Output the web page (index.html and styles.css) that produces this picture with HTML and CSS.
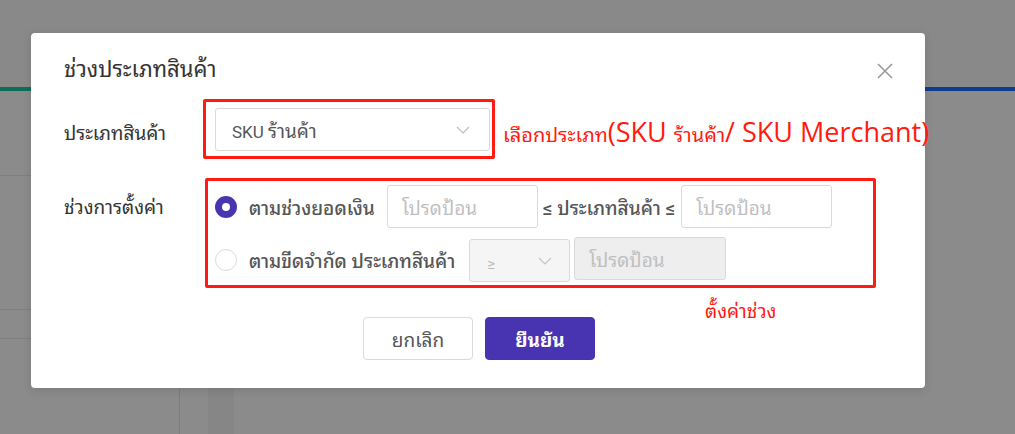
FILE: index.html
```html
<!DOCTYPE html>
<html lang="th">
<head>
<meta charset="utf-8">
<link rel="stylesheet" href="styles.css">
</head>
<body>
<div class="page">
  <div class="topbar"></div>
  <div class="tabline"><div class="tab-green"></div><div class="tab-blue"></div></div>
  <div class="content">
    <div class="leftcol">
      <div class="lrow r1"></div>
      <div class="lrow r2"></div>
      <div class="lrow r3"></div>
    </div>
    <div class="gutter"></div>
    <div class="darkcol"></div>
    <div class="rest"></div>
  </div>
</div>

<div class="modal">
  <div class="modal-head">
    <div class="title">ช่วงประเภทสินค้า</div>
    <svg class="close" width="16" height="16" viewBox="0 0 16 16"><path d="M1 1L15 15M15 1L1 15" stroke="#9a9a9a" stroke-width="1.6" fill="none"/></svg>
  </div>
  <div class="form">
    <div class="row">
      <div class="label l1">ประเภทสินค้า</div>
      <div class="field">
        <div class="mark mark1">
          <div class="select">
            <span>SKU <span class="th">ร้านค้า</span></span>
            <svg class="chev" width="14" height="8" viewBox="0 0 14 8"><path d="M1 1L7 7L13 1" stroke="#bdbdbd" stroke-width="1.2" fill="none"/></svg>
          </div>
        </div>
        <div class="note1"><span class="th">เลือกประเภท</span>(SKU <span class="th">ร้านค้า</span>/ SKU Merchant)</div>
      </div>
    </div>
    <div class="row row2">
      <div class="label l2">ช่วงการตั้งค่า</div>
      <div class="field">
        <div class="mark mark2">
          <div class="line">
            <span class="radio on"></span>
            <span class="opt">ตามช่วงยอดเงิน</span>
            <div class="input">โปรดป้อน</div>
            <span class="opt mid">≤ ประเภทสินค้า ≤</span>
            <div class="input">โปรดป้อน</div>
          </div>
          <div class="line line2">
            <span class="radio"></span>
            <span class="opt">ตามขีดจำกัด ประเภทสินค้า</span>
            <div class="mini-select"><span class="ge">≥</span><svg class="chev" width="14" height="8" viewBox="0 0 14 8"><path d="M1 1L7 7L13 1" stroke="#c4c4c4" stroke-width="1.2" fill="none"/></svg></div>
            <div class="input disabled">โปรดป้อน</div>
          </div>
          <div class="note2">ตั้งค่าช่วง</div>
        </div>
      </div>
    </div>
  </div>
  <div class="footer">
    <button class="btn cancel">ยกเลิก</button>
    <button class="btn ok">ยืนยัน</button>
  </div>
</div>
</body>
</html>
```

FILE: styles.css
```css
* { box-sizing: border-box; }
html, body { margin: 0; padding: 0; }
body {
  width: 1015px;
  height: 434px;
  overflow: hidden;
  background: #8b8b8b;
  font-family: Roboto, "Noto Sans Thai Looped", sans-serif;
  position: relative;
}
.page { display: flex; flex-direction: column; height: 434px; }
.topbar { height: 87px; background: #898989; }
.tabline { height: 4px; display: flex; }
.tab-green { width: 480px; background: #0c6e56; }
.tab-blue { flex: 1; background: #0b3f8d; }
.content { flex: 1; display: flex; }
.leftcol { width: 180px; border-right: 1px solid #7d7d7d; display: flex; flex-direction: column; }
.lrow { border-bottom: 1px solid #7f7f7f; }
.r1 { height: 85px; }
.r2 { height: 134px; }
.r3 { height: 29px; }
.gutter { width: 28px; }
.darkcol { width: 26px; background: #868686; }
.rest { flex: 1; }

.modal {
  position: absolute;
  left: 31px;
  top: 33px;
  width: 894px;
  height: 355px;
  background: #fff;
  border-radius: 4px;
  box-shadow: 0 2px 10px rgba(0,0,0,0.12);
  padding: 24px 32px 28px 33px;
  display: flex;
  flex-direction: column;
}
.modal-head { display: flex; justify-content: space-between; align-items: center; height: 26px; }
.title { font-size: 22px; color: #333; line-height: 26px; }
.close { margin-top: 2px; }

.form { display: flex; flex-direction: column; gap: 19px; margin-top: 16px; }
.row { display: flex; align-items: flex-start; }
.label { width: 139px; flex: none; font-size: 19px; color: #333; white-space: nowrap; }
.l1 { height: 60px; line-height: 70px; }
.l2 { height: 58px; line-height: 60px; }
.field { display: flex; align-items: center; flex: none; }
.mark { border: 3px solid #ff1a12; border-radius: 2px; flex: none; }
.mark1 { width: 292px; height: 60px; padding: 6px 2px 5px 9px; }
.select {
  width: 275px; height: 43px;
  border: 1px solid #d9d9d9; border-radius: 3px;
  display: flex; align-items: center; justify-content: space-between;
  padding: 0 19px 0 16px;
  font-size: 17px; color: #555;
}
.select .th { font-size: 19px; }
.note1 { margin-left: 8px; margin-top: 4px; color: #ff1a12; font-size: 27px; white-space: nowrap; font-family: "Open Sans", "Noto Sans Thai Looped", sans-serif; }
.note1 .th { font-size: 20px; font-family: "Noto Sans Thai Looped", sans-serif; }

.mark2 { position: relative; width: 671px; height: 110px; padding: 4px 0 2px 7px; display: flex; flex-direction: column; gap: 10px; margin-left: 2px; }
.line { display: flex; align-items: center; height: 43px; }
.radio { width: 22px; height: 22px; border-radius: 50%; border: 1px solid #dcdcdc; flex: none; }
.radio.on { border: 7px solid #4a35b0; background: #fff; }
.opt { font-size: 19px; color: #555; font-weight: 500; margin-left: 12px; white-space: nowrap; }
.opt.mid { margin-left: 5px; margin-right: 6px; }
.input {
  width: 151px; height: 43px; margin-left: 12px; flex: none;
  border: 1px solid #d9d9d9; border-radius: 3px;
  font-size: 19px; color: #bfbfbf; padding-left: 14px;
  display: flex; align-items: center;
}
.line .mid + .input { margin-left: 0; }
.mini-select {
  width: 101px; height: 43px; margin-left: 14px; margin-top: 2px; flex: none;
  border: 1px solid #d9d9d9; border-radius: 3px; background: #f5f5f5;
  display: flex; align-items: center; justify-content: space-between;
  padding: 0 17px 0 17px; font-size: 15px; color: #bbb;
}
.ge { padding-top: 6px; }
.input.disabled { width: 152px; margin-left: 4px; background: #eeeeee; margin-top: -2px; }
.note2 { position: absolute; left: 497px; top: 113px; color: #ff1a12; font-size: 19px; white-space: nowrap; font-family: "Noto Sans Thai Looped", sans-serif; }

.footer { margin-top: auto; display: flex; justify-content: center; gap: 12px; padding-left: 1px; }
.btn {
  width: 110px; height: 43px; border-radius: 4px; font-size: 19px;
  font-family: Roboto, "Noto Sans Thai Looped", sans-serif; cursor: pointer;
}
.cancel { background: #fff; border: 1px solid #d9d9d9; color: #555; }
.ok { background: #4834b0; border: 1px solid #4834b0; color: #fff; font-weight: 700; }
```
